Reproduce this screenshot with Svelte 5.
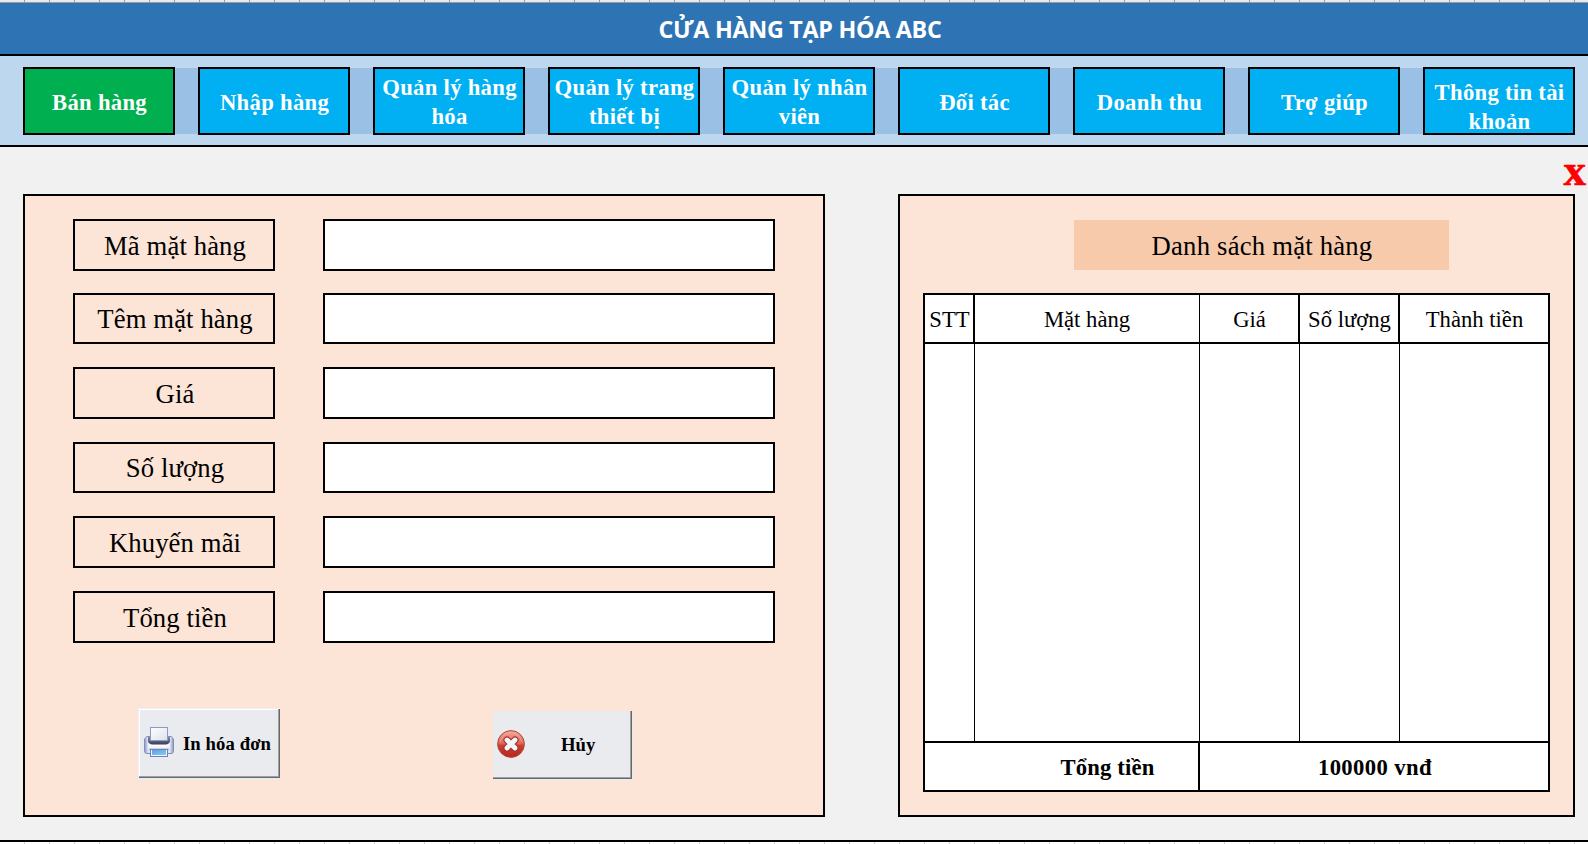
<script>
  const tabs = [
    { name: 'Bán hàng', fit: 'one' },
    { name: 'Nhập hàng', fit: 'one' },
    { name: 'Quản lý hàng hóa', fit: 'two' },
    { name: 'Quản lý trang thiết bị', fit: 'two' },
    { name: 'Quản lý nhân viên', fit: 'two' },
    { name: 'Đối tác', fit: 'one' },
    { name: 'Doanh thu', fit: 'one' },
    { name: 'Trợ giúp', fit: 'one' },
    { name: 'Thông tin tài khoản', fit: 'low' }
  ];
  const fields = ['Mã mặt hàng', 'Têm mặt hàng', 'Giá', 'Số lượng', 'Khuyến mãi', 'Tổng tiền'];
  const columns = ['STT', 'Mặt hàng', 'Giá', 'Số lượng', 'Thành tiền'];
  let active = $state(0);
</script>

<div class="page">
  <div class="ruler"></div>
  <header><h1>CỬA HÀNG TẠP HÓA ABC</h1></header>
  <nav>
    <div class="tabs">
      {#each tabs as tab, i}
        <button class="tab {tab.fit}" class:active={active === i} onclick={() => (active = i)}>{tab.name}</button>
      {/each}
    </div>
  </nav>

  <div class="closebar"><span class="close">x</span></div>

  <main>
    <section class="form">
      <div class="fields">
        {#each fields as field}
          <div class="label">{field}</div>
          <input aria-label={field} />
        {/each}
      </div>
      <div class="actions">
        <button class="action print">
          <svg width="32" height="32" viewBox="0 0 32 32">
            <defs>
              <linearGradient id="body" x1="0" y1="0" x2="0" y2="1">
                <stop offset="0" stop-color="#f4f6fc" />
                <stop offset=".6" stop-color="#e6eaf6" />
                <stop offset="1" stop-color="#a3afd5" />
              </linearGradient>
              <linearGradient id="side" x1="0" y1="0" x2="1" y2="0">
                <stop offset="0" stop-color="#8d9ac6" />
                <stop offset=".14" stop-color="#f8faff" stop-opacity=".7" />
                <stop offset=".86" stop-color="#f8faff" stop-opacity=".7" />
                <stop offset="1" stop-color="#8d9ac6" />
              </linearGradient>
              <linearGradient id="slot" x1="0" y1="0" x2="0" y2="1">
                <stop offset="0" stop-color="#8b92a8" />
                <stop offset="1" stop-color="#353c55" />
              </linearGradient>
              <linearGradient id="sheet" x1="0" y1="0" x2="1" y2="1">
                <stop offset="0" stop-color="#ffffff" />
                <stop offset="1" stop-color="#dde1ee" />
              </linearGradient>
              <linearGradient id="tray" x1="0" y1="0" x2="1" y2="1">
                <stop offset="0" stop-color="#5ba2dc" />
                <stop offset="1" stop-color="#8bc8f2" />
              </linearGradient>
            </defs>
            <path d="M3.500 10.500h25l2 2.500v12q0 2.500-2.500 2.500h-24q-2.500 0-2.500-2.500v-12z" fill="url(#body)" stroke="#8290bc" />
            <path d="M3.500 11h25l1.500 2v12q0 2-2 2h-24q-2 0-2-2v-12z" fill="url(#side)" />
            <path d="M5 10.500h22v4q0 4-4 4h-14q-4 0-4-4z" fill="url(#slot)" />
            <path d="M5.500 17q1 2.500 3.500 2.500h14q2.500 0 3.500-2.500" fill="none" stroke="#fff" />
            <rect x="7.500" y="1.500" width="17" height="13" fill="url(#sheet)" stroke="#8d9ac4" />
            <path d="M6.500 23.500h19" stroke="#6d7bae" stroke-width="1.500" />
            <rect x="7.500" y="23.500" width="17" height="7" fill="#eef6ff" stroke="#6f82b8" />
            <rect x="9" y="24" width="14" height="5" fill="url(#tray)" />
          </svg>
          <span>In hóa đơn</span>
        </button>
        <button class="action cancel">
          <svg width="28" height="28" viewBox="0 0 28 28">
            <defs>
              <linearGradient id="ball" x1="0" y1="0" x2="0" y2="1">
                <stop offset="0" stop-color="#efa99c" />
                <stop offset=".48" stop-color="#dc6655" />
                <stop offset=".56" stop-color="#c93f32" />
                <stop offset="1" stop-color="#b8251e" />
              </linearGradient>
            </defs>
            <circle cx="14" cy="14" r="13.400" fill="url(#ball)" stroke="#b5473d" />
            <path d="M3 12q3-9.500 11-9.500t11 9.500" fill="none" stroke="#f0b3a8" opacity=".6" />
            <path d="M10 10l8 8M18 10l-8 8" stroke="#a5302b" stroke-width="7" stroke-linecap="round" />
            <path d="M10 10l8 8M18 10l-8 8" stroke="#f3f6fa" stroke-width="4.800" stroke-linecap="round" />
          </svg>
          <span>Hủy</span>
        </button>
      </div>
    </section>

    <section class="list">
      <h2>Danh sách mặt hàng</h2>
      <div class="table">
        <div class="row head">
          {#each columns as column}<div>{column}</div>{/each}
        </div>
        <div class="row body">
          {#each columns as column}<div></div>{/each}
        </div>
        <div class="row foot">
          <div>Tổng tiền</div>
          <div>100000 vnđ</div>
        </div>
      </div>
    </section>
  </main>
  <div class="gridedge"></div>
</div>

<style>
  :global(body) {
    margin: 0;
    overflow: hidden;
  }
  .page,
  .page * {
    box-sizing: border-box;
  }
  .page {
    width: 1588px;
    height: 844px;
    display: flex;
    flex-direction: column;
    background: #f1f1f1;
    color: #000;
    font-family: 'Liberation Serif', 'Times New Roman', serif;
  }
  .page > * {
    flex: none;
  }
  button {
    font-family: inherit;
    margin: 0;
    cursor: pointer;
  }
  .ruler {
    height: 3px;
    border-bottom: 1px solid #999;
    background: repeating-linear-gradient(90deg, #e8eaed 0 24px, #9b9b9b 24px 25px);
  }
  header {
    height: 53px;
    border-bottom: 2px solid #000;
    background: #2e74b5;
    display: flex;
    justify-content: center;
    padding: 9px 0 0 12px;
  }
  h1 {
    margin: 0;
    color: #fff;
    font: 700 23.300px/34px 'Open Sans', 'Noto Sans', sans-serif;
    letter-spacing: -0.280px;
    white-space: nowrap;
  }
  nav {
    height: 91px;
    padding: 11px 13px 0 23px;
    background: #bdd7ee;
    border-bottom: 2px solid #000;
  }
  .tabs {
    display: flex;
    gap: 23px;
    height: 68px;
    background: linear-gradient(#9bc0e6, #9bc0e6) 1px 1px / 1550px 66px no-repeat;
  }
  .tab {
    width: 152px;
    height: 68px;
    border: 2px solid #000;
    padding: 3px 0 0 1px;
    background: #00b0f3;
    color: #fff;
    font-weight: 700;
    font-size: 22.670px;
    line-height: 29px;
    letter-spacing: 0.300px;
  }
  .tab.active {
    background: #00b050;
  }
  .tab.two {
    padding: 2px 0 0 1px;
  }
  .tab.low {
    padding-top: 9px;
  }
  .closebar {
    height: 47px;
    display: flex;
    justify-content: flex-end;
    padding-right: 2px;
  }
  .close {
    color: #f00;
    font-size: 45px;
    line-height: 46px;
    font-weight: 700;
    -webkit-text-stroke: 0.600px #f00;
  }
  main {
    height: 623px;
    display: flex;
    gap: 73px;
    padding-left: 23px;
  }
  section {
    border: 2px solid #000;
    background: #fce4d6;
  }
  .form {
    width: 802px;
    padding: 23px 48px 0;
  }
  .fields {
    display: grid;
    grid-template-columns: 202px 452px;
    grid-template-rows: 51px 51px 52px 51px 52px 52px;
    column-gap: 48px;
    row-gap: 23px;
  }
  .label {
    border: 2px solid #000;
    display: flex;
    align-items: center;
    justify-content: center;
    padding: 2px 0 0 2px;
    font-size: 26.670px;
    line-height: 30px;
    letter-spacing: 0.120px;
  }
  .label:nth-child(3),
  .label:nth-child(7) {
    padding-top: 0;
  }
  input {
    width: 452px;
    height: 100%;
    border: 2px solid #000;
    border-radius: 0;
    background: #fff;
    padding: 0 8px;
    font: 26.670px 'Liberation Serif', serif;
    outline: none;
  }
  .label:first-child,
  .label:first-child + input {
    height: 52px;
  }
  .actions {
    display: flex;
    gap: 213px;
    padding: 65px 0 0 65px;
  }
  .action {
    display: flex;
    align-items: center;
    background: #e9ebef;
    color: #000;
    font-size: 18.670px;
    font-weight: 700;
    line-height: 22px;
    white-space: nowrap;
    border: 0;
    border-radius: 0;
  }
  .print {
    width: 142px;
    height: 70px;
    padding: 0 0 0 5px;
    gap: 8px;
    letter-spacing: 0.100px;
    border-top: 1px solid #eef0f2;
    box-shadow:
      inset 1px 0 #eceef0,
      inset -1px -1px #696969,
      inset -2px -2px #a0a0a0,
      inset 2px 1px #fff,
      0 2px #e9ebef;
  }
  .cancel {
    width: 139px;
    height: 68px;
    margin-top: 3px;
    padding: 0 0 0 4px;
    gap: 36px;
    box-shadow:
      inset -1px -1px #696969,
      inset -2px -2px #a0a0a0,
      1px 2px #e9ebef;
  }
  .print svg {
    margin-top: -4px;
  }
  .cancel svg {
    margin-top: -3px;
  }
  .print span {
    padding-top: 0;
  }
  .cancel span {
    margin-top: -1px;
  }
  .list {
    width: 677px;
    padding: 24px 23px 0;
  }
  h2 {
    width: 375px;
    height: 50px;
    margin: 0 0 23px 151px;
    padding: 2px 0 0 1px;
    background: #f7caac;
    font-weight: 400;
    font-size: 26.670px;
    line-height: 48px;
    letter-spacing: 0.220px;
    text-align: center;
  }
  .table {
    width: 627px;
    height: 499px;
    border: 2px solid #000;
    background: #fff;
    font-size: 22.670px;
    display: flex;
    flex-direction: column;
  }
  .row {
    display: grid;
    grid-template-columns: 50px 225px 100px 100px 148px;
  }
  .head {
    height: 49px;
    border-bottom: 2px solid #000;
  }
  .head div {
    display: flex;
    align-items: center;
    justify-content: center;
    padding: 2px 0 0 1px;
    border-right: 2px solid #000;
    white-space: nowrap;
  }
  .head div:nth-child(2) {
    border-right-width: 1px;
    padding-left: 0;
  }
  .body {
    height: 399px;
    border-bottom: 2px solid #000;
  }
  .body div {
    border-right: 1px solid #000;
  }
  .head div:last-child,
  .body div:last-child {
    border-right: 0;
  }
  .foot {
    height: 47px;
    grid-template-columns: 275px 348px;
    font-weight: 700;
  }
  .foot div {
    display: flex;
    align-items: center;
    justify-content: center;
    padding: 2px 0 0 2px;
    letter-spacing: 0.400px;
  }
  .foot div:first-child {
    border-right: 2px solid #000;
    padding-left: 92px;
    letter-spacing: 0.150px;
  }
  .gridedge {
    height: 4px;
    margin-top: 23px;
    border-top: 2px solid #000;
    background: repeating-linear-gradient(90deg, #fff 0 24px, #cfcfcf 24px 25px);
  }
</style>
